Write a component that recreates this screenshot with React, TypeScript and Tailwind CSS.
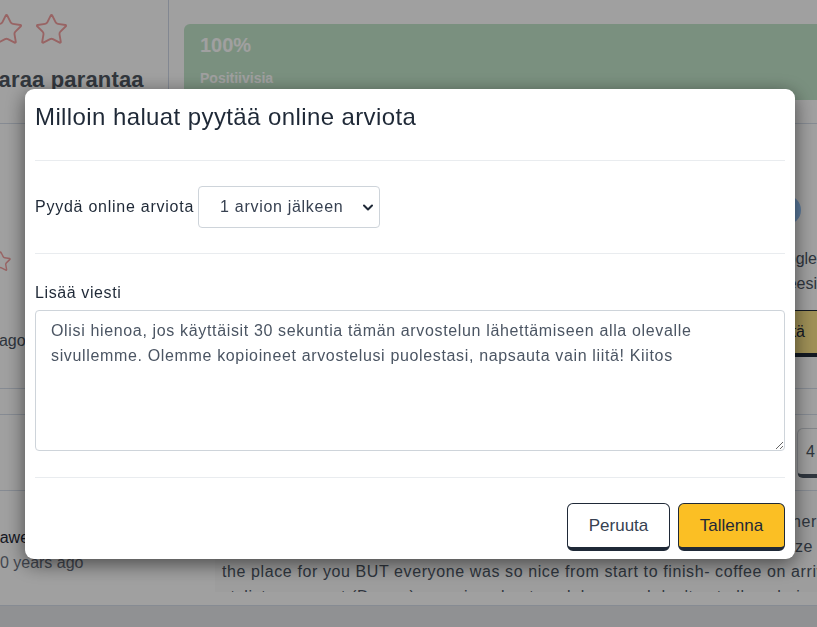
import React from "react";
import { Star } from "lucide-react";

function BackgroundPage() {
  return (
    <div className="flex h-[627px] w-full flex-col overflow-hidden bg-white text-[16px] text-[#4b5563]">
      {/* top section */}
      <div className="flex h-[124px] shrink-0 border-b border-[#d6deea]">
        <div className="w-[169px] shrink-0 border-r border-[#cfd8e8] pt-[12px]">
          <div className="-ml-[11px] flex gap-[10px] text-[#f3a0a0]">
            <Star size={35} strokeWidth={1.3} />
            <Star size={35} strokeWidth={1.3} />
          </div>
          <div className="-ml-[15px] mt-[19px] whitespace-nowrap text-[22px] font-bold leading-[28px] tracking-[0.15px] text-[#505862]">
            Varaa parantaa
          </div>
        </div>
        <div className="min-w-0 flex-1 pl-[15px] pt-[24px]">
          <div className="-mr-[20px] h-[76px] rounded-md bg-[#c3e6cb] pl-[16px] pt-[7px] text-white">
            <div className="text-[20px] font-bold leading-[28px]">100%</div>
            <div className="mt-[9px] text-[14px] font-bold leading-[20px]">Positiivisia</div>
          </div>
        </div>
      </div>

      {/* second section */}
      <div className="flex h-[265px] shrink-0 border-b border-[#d6deea]">
        <div className="w-[169px] shrink-0">
          <div className="-ml-[11px] mt-[126px] flex text-[#f3a0a0]">
            <Star size={23} strokeWidth={1.5} />
          </div>
          <div className="-ml-[58px] mt-[56px] whitespace-nowrap leading-[24px]">2 years ago</div>
        </div>
        <div className="flex-1" />
        <div className="flex w-[140px] shrink-0 flex-col">
          <div className="ml-[94px] mt-[71px] h-[30px] w-[30px] rounded-full bg-[#93c5fd]" />
          <div className="mt-[21px] whitespace-nowrap text-right leading-[25px]">
            <div>Arvostele Google</div>
            <div>palautteesi</div>
          </div>
          <div className="mt-[14px] flex h-[47px] w-[160px] items-center justify-end rounded-md border border-b-4 border-[#1f2937] bg-[#fde68a] pr-[31px] text-[#1f2937]">
            Lähetä
          </div>
        </div>
      </div>

      {/* band */}
      <div className="h-[26px] shrink-0 border-b border-[#d6deea]" />

      {/* pagination row */}
      <div className="flex h-[76px] shrink-0 justify-end border-b border-[#d6deea]">
        <div className="-mr-[20px] mt-[13px] flex h-[50px] w-[40px] items-center rounded-md border border-b-4 border-[#d1d5db] border-b-[#4b5563] pl-[8px]">
          4
        </div>
      </div>

      {/* review row */}
      <div className="flex h-[115px] shrink-0 border-b border-[#d6deea]">
        <div className="w-[215px] shrink-0 pt-[34px]">
          <div className="-ml-[59px] whitespace-nowrap leading-[25px] text-[#1f2937]">Sarah Dawes</div>
          <div className="-ml-[9px] whitespace-nowrap leading-[25px] text-[#6b7280]">10 years ago</div>
        </div>
        <div className="h-[101px] min-w-0 flex-1 overflow-hidden bg-[#fafafa] pl-[7px] pt-[18px] leading-[25px] tracking-[0.6px]">
          <div className="whitespace-nowrap text-right">Booked in for a cut and colour on a recommendation from a friend and her</div>
          <div className="whitespace-nowrap pr-[4px] text-right">sister. Finding the salon upstairs felt a bit like a maze</div>
          <div className="whitespace-nowrap">the place for you BUT everyone was so nice from start to finish- coffee on arrival and biscuits too</div>
          <div className="whitespace-nowrap">stylist was great (Darren) - so nice about my lob my god don't cut all my hair off</div>
        </div>
      </div>

      <div className="flex-1 bg-[#e5e7eb]" />
    </div>
  );
}

export default function App() {
  return (
    <div className="relative h-[627px] w-full overflow-hidden font-['Liberation_Sans',Arial,sans-serif]">
      <BackgroundPage />

      <div className="fixed inset-0 bg-[rgba(0,0,0,0.373)] pl-[25px] pt-[89px]">
        <div className="flex h-[470px] w-[770px] flex-col rounded-[9px] bg-white px-[10px] shadow-[0_5px_20px_rgba(0,0,0,0.55)]">
          <div className="h-[72px] shrink-0 border-b border-[#e9ecef] pt-[12px]">
            <h2 className="text-[24px] leading-[32px] tracking-[0.4px] text-[#1f2937]">
              Milloin haluat pyytää online arviota
            </h2>
          </div>

          <div className="flex h-[93px] shrink-0 items-center gap-[4px] border-b border-[#e9ecef]">
            <label className="text-[16px] leading-[24px] tracking-[0.75px] text-[#1f2937]">
              Pyydä online arviota
            </label>
            <div className="relative">
              <select
                defaultValue="1"
                className="block h-[42px] w-[182px] appearance-none rounded-[4px] border border-[#ced4da] bg-white pl-[21px] text-[16px] tracking-[0.7px] text-[#374151]"
              >
                <option value="1">1 arvion jälkeen</option>
                <option value="2">2 arvion jälkeen</option>
                <option value="3">3 arvion jälkeen</option>
              </select>
              <svg
                className="pointer-events-none absolute right-[7px] top-[18px]"
                width="10"
                height="7"
                viewBox="0 0 10 7"
                fill="none"
              >
                <path d="M1 1.5l4 4 4-4" stroke="#1f2937" strokeWidth="2" strokeLinecap="round" strokeLinejoin="round" />
              </svg>
            </div>
          </div>

          <div className="h-[224px] shrink-0 border-b border-[#e9ecef] pt-[27px]">
            <div className="text-[16px] leading-[24px] tracking-[0.6px] text-[#1f2937]">Lisää viesti</div>
            <textarea
              className="mt-[5px] block h-[141px] w-full rounded-[4px] border border-[#ced4da] px-[15px] pb-[6px] pt-[7px] text-[16px] leading-[25px] tracking-[0.65px] text-[#4b5563]"
              defaultValue="Olisi hienoa, jos käyttäisit 30 sekuntia tämän arvostelun lähettämiseen alla olevalle sivullemme. Olemme kopioineet arvostelusi puolestasi, napsauta vain liitä! Kiitos"
            />
          </div>

          <div className="flex justify-end gap-[8px] pt-[25px]">
            <button className="flex h-[48px] w-[103px] items-center justify-center rounded-[6px] border border-b-4 border-[#1f2937] bg-white text-[17px] text-[#374151]">
              Peruuta
            </button>
            <button className="flex h-[48px] w-[107px] items-center justify-center rounded-[6px] border border-b-4 border-[#1f2937] bg-[#fbbf24] text-[17px] text-[#1f2937]">
              Tallenna
            </button>
          </div>
        </div>
      </div>
    </div>
  );
}
